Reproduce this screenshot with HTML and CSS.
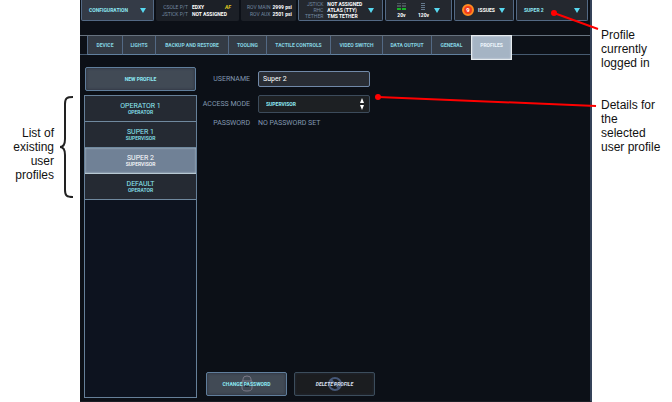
FILE: index.html
```html
<!DOCTYPE html>
<html lang="en">
<head>
<meta charset="utf-8">
<title>Profiles</title>
<link rel="stylesheet" href="styles.css">
</head>
<body>
<div class="figure">
  <aside class="note note-left">
    <p>List of<br>existing<br>user<br>profiles</p>
    <svg class="brace" viewBox="0 0 14 102" aria-hidden="true"><path d="M13 1C7 1 5 2 5 8V43C5 48 3 51 0 51C3 51 5 54 5 59V94C5 100 7 101 13 101"/></svg>
  </aside>

  <main class="app">
    <header class="topbar">
      <button class="cell cell-menu" type="button"><span>CONFIGURATION</span><i class="caret"></i></button>
      <div class="cell cell-info">
        <dl class="readout">
          <dt>CSOLE P/T</dt><dd>EDXY <em>AF</em></dd>
          <dt>JSTICK P/T</dt><dd>NOT ASSIGNED</dd>
        </dl>
      </div>
      <div class="cell cell-info cell-end">
        <dl class="readout">
          <dt>ROV MAIN</dt><dd>2999 psi</dd>
          <dt>ROV AUX</dt><dd>2501 psi</dd>
        </dl>
      </div>
      <button class="cell cell-devices" type="button">
        <span class="readout readout-dense">
          <span class="key">JSTICK</span><b>NOT ASSIGNED</b>
          <span class="key">RHC</span><b>ATLAS (TTY)</b>
          <span class="key">TETHER</span><b>TMS TETHER</b>
        </span>
        <i class="caret"></i>
      </button>
      <button class="cell cell-power" type="button">
        <span class="meter">
          <svg viewBox="0 0 9 8" aria-hidden="true"><path class="off" d="M0 0h4v1H0zM5 0h4v1H5zM0 2h4v2H0zM5 2h4v2H5z"/><path class="on" d="M0 5h4v2H0zM5 5h4v2H5z"/></svg>
          <b>20v</b>
        </span>
        <span class="meter">
          <svg viewBox="0 0 9 8" aria-hidden="true"><path class="idle" d="M2 0h4v1H2zM2 2h4v1H2zM2 4h4v1H2zM2 6h4v1H2z"/></svg>
          <b>120v</b>
        </span>
        <i class="caret"></i>
      </button>
      <button class="cell cell-issues" type="button"><span class="count">9</span><b>ISSUES</b><i class="caret"></i></button>
      <button class="cell cell-menu cell-user" type="button"><span>SUPER 2</span><i class="caret"></i></button>
    </header>

    <nav class="tabs">
      <a href="#device">DEVICE</a>
      <a href="#lights">LIGHTS</a>
      <a href="#backup">BACKUP AND RESTORE</a>
      <a href="#tooling">TOOLING</a>
      <a href="#tactile">TACTILE CONTROLS</a>
      <a href="#video">VIDEO SWITCH</a>
      <a href="#data">DATA OUTPUT</a>
      <a href="#general">GENERAL</a>
      <a class="active" href="#profiles" aria-current="page">PROFILES</a>
    </nav>

    <div class="content">
      <section class="sidebar">
        <button class="button button-new" type="button">NEW PROFILE</button>
        <div class="profiles">
          <button type="button">OPERATOR 1<small>OPERATOR</small></button>
          <button type="button">SUPER 1<small>SUPERVISOR</small></button>
          <button class="selected" type="button">SUPER 2<small>SUPERVISOR</small></button>
          <button type="button">DEFAULT<small>OPERATOR</small></button>
        </div>
      </section>

      <form class="details">
        <div class="fields">
          <label for="username">USERNAME</label>
          <input id="username" type="text" value="Super 2">
          <label for="mode">ACCESS MODE</label>
          <div class="select">
            <select id="mode"><option>SUPERVISOR</option><option>OPERATOR</option></select>
            <svg viewBox="0 0 6 12" aria-hidden="true"><path d="M3 0L5 5H1zM3 12L1 7H5z"/></svg>
          </div>
          <span class="caption">PASSWORD</span>
          <span>NO PASSWORD SET</span>
        </div>
        <div class="actions">
          <button class="button button-action" type="button">
            <svg viewBox="0 0 16 18" aria-hidden="true"><path d="M4 6V4Q4 1 8 1T12 4V6M3 6H13V13Q13 16 8 16T3 13Z"/><path class="hole" d="M8 8L10 12H6z"/></svg>
            <span>CHANGE PASSWORD</span>
          </button>
          <button class="button button-action button-delete" type="button">
            <svg viewBox="0 0 16 18" aria-hidden="true"><circle cx="8" cy="9" r="6"/><path d="M4 5L12 13"/></svg>
            <span>DELETE PROFILE</span>
          </button>
        </div>
      </form>
    </div>
  </main>

  <aside class="note note-right">
    <p>Profile<br>currently<br>logged in</p>
    <p>Details for<br>the<br>selected<br>user profile</p>
    <svg class="pointer pointer-user" viewBox="0 0 48 24" aria-hidden="true"><path d="M3 4L47 20"/><circle cx="3" cy="4" r="3"/></svg>
    <svg class="pointer pointer-details" viewBox="0 0 222 18" aria-hidden="true"><path d="M3 4L221 13"/><circle cx="3" cy="4" r="3"/></svg>
  </aside>
</div>
</body>
</html>
```
FILE: styles.css
```css
* { box-sizing: border-box; }

body {
  margin: 0;
  background: #fff;
  font-family: Roboto, "Liberation Sans", sans-serif;
}

button, input, select {
  margin: 0;
  font-family: inherit;
  color: inherit;
}

.figure {
  display: grid;
  grid-template-columns: 80px 1fr 80px;
  min-height: 100vh;
}

/* Annotations */
.note {
  position: relative;
  color: #111;
  font: 12px/14px "Liberation Sans", Arial, sans-serif;
}
.note p { margin: 0; white-space: nowrap; }
.note-left { padding: 126px 26px 0 0; text-align: right; }
.note-right { padding: 28px 0 0 9px; }
.note-right p + p { margin-top: 28px; }

.brace {
  position: absolute;
  left: 60px;
  top: 96px;
  width: 14px;
  height: 102px;
  fill: none;
  stroke: #222;
  stroke-width: 2;
}
.pointer {
  position: absolute;
  fill: #f00;
  stroke: #f00;
  stroke-width: 2;
}
.pointer circle { stroke: none; }
.pointer-user { right: 73px; top: 9px; width: 48px; height: 24px; }
.pointer-details { right: 75px; top: 93px; width: 222px; height: 18px; }

/* Application window */
.app {
  display: flex;
  flex-direction: column;
  min-width: 0;
  background: #0c1017;
  border-right: 2px solid #354359;
  border-bottom: 1px solid #1b1f26;
  color: #8eeaf5;
}

.topbar {
  display: grid;
  grid-template-columns: 73fr 83fr 55fr 85fr 67fr 60fr 72fr;
  gap: 2px;
  height: 21px;
  padding: 0 2px 0 1px;
}
.cell {
  display: flex;
  align-items: center;
  min-width: 0;
  padding: 0 7px;
  background: #24282f;
  border: 1px solid #536984;
  border-top: 0;
  border-radius: 0 0 2px 2px;
  font-size: 5px;
  line-height: 6px;
  font-weight: 700;
  white-space: nowrap;
}
.cell b { color: #fff; font-weight: 700; }
.cell-menu { justify-content: space-between; background: #343b47; }
.cell-user { background: #24282f; }
.cell-info { border-color: #1c2027; background: #1c2027; padding: 0 7px 0 5px; }
.cell-end { padding: 0 8px 0 5px; }
.cell-devices { justify-content: space-between; padding: 0 8px 0 6px; }
.cell-power { padding: 0 11px; }
.cell-power .meter + .meter { margin-left: 12px; }
.cell-power .caret { margin-left: auto; }
.cell-issues { justify-content: space-between; padding: 0 8px 0 7px; }

.caret {
  border: 3px solid transparent;
  border-top: 5px solid #57d8f0;
  border-bottom: 0;
}

.readout {
  display: grid;
  grid-template-columns: auto 1fr;
  gap: 1px 4px;
  flex: 1;
  margin: 0;
}
.readout dt, .readout .key {
  color: #7388a1;
  font-weight: 400;
  text-align: right;
}
.readout dd {
  display: flex;
  justify-content: space-between;
  margin: 0;
  color: #fff;
  font-weight: 700;
}
.readout em { color: #e5d21f; }
.readout-dense { flex: none; gap: 0 4px; text-align: left; }
.cell-end .readout { gap: 1px 2px; }

.meter {
  display: flex;
  flex-direction: column;
  align-items: center;
  gap: 1px;
}
.meter svg { width: 9px; height: 8px; }
.meter .off { fill: #4b555c; }
.meter .on { fill: #18b427; }
.meter .idle { fill: #64788c; }

.count {
  display: grid;
  place-items: center;
  width: 12px;
  height: 12px;
  background: #f23c1d;
  border: 2px solid #ff8b20;
  border-radius: 50%;
  color: #fff;
  font-size: 6px;
  font-weight: 700;
}

/* Tabs */
.tabs {
  display: grid;
  grid-template-columns: 35fr 33fr 73fr 38fr 64fr 52fr 49fr 40fr 41fr;
  height: 20px;
  margin-top: 14px;
  padding: 0 78px 0 7px;
  border-top: 1px solid #66727f;
  border-bottom: 1px solid #465a70;
}
.tabs a {
  height: 19px;
  background: #343b45;
  border-left: 1px solid #536984;
  border-bottom: 1px solid #61809f;
  color: #86d5e2;
  font-size: 5px;
  line-height: 18px;
  font-weight: 700;
  text-align: center;
  text-decoration: none;
  white-space: nowrap;
}
.tabs .active {
  height: 25px;
  margin-top: -1px;
  background: #a5b4c4;
  border: 1px solid #e6ebef;
  box-shadow: inset 0 0 2px #e6ebef;
  color: #eef6fc;
}

/* Content */
.content {
  display: flex;
  flex: 1;
  padding: 12px 0 3px 4px;
}
.sidebar {
  display: flex;
  flex-direction: column;
  flex: 0 0 113px;
  gap: 4px;
}
.button {
  border: 1px solid #607e9c;
  border-radius: 2px;
  background: #414a55;
  box-shadow: inset 0 0 3px #252d39;
  font-size: 5px;
  font-weight: 700;
}
.button-new { height: 24px; margin: 0 1px; }

.profiles {
  flex: 1;
  background: #0d131f;
  border: 1px solid #668099;
}
.profiles button {
  display: block;
  width: 100%;
  height: 26px;
  padding: 0;
  background: #252a33;
  border: 0;
  border-bottom: 1px solid #70899f;
  font-size: 7px;
  line-height: 8px;
}
.profiles small {
  display: block;
  font-size: 5px;
  line-height: 5px;
  font-weight: 500;
}
.profiles .selected {
  background: #708196;
  box-shadow: inset 0 0 2px #c1d0dc;
  border-color: #b8c9d3;
  color: #fff;
}

.details {
  display: flex;
  flex-direction: column;
  justify-content: space-between;
  flex: 1;
  padding: 4px 0 2px;
}
.fields {
  display: grid;
  grid-template-columns: 53px 112px;
  gap: 8px;
  align-items: center;
  color: #8299b1;
  font-size: 7px;
  line-height: 4px;
}
.fields label, .caption { text-align: right; white-space: nowrap; }
.fields label { justify-self: end; }
.fields input {
  width: 100%;
  height: 16px;
  padding: 0 4px;
  background: #292d34;
  border: 1px solid #7189a8;
  border-radius: 2px;
  color: #fff;
  font-size: 7px;
}
.select { position: relative; height: 18px; }
.fields select {
  appearance: none;
  display: block;
  width: 100%;
  height: 100%;
  padding: 0 7px;
  background: #1d2023;
  border: 1px solid #3c4b5b;
  border-radius: 2px;
  color: #8eeaf5;
  font-size: 5px;
  font-weight: 700;
}
.select svg {
  position: absolute;
  right: 5px;
  top: 3px;
  width: 6px;
  height: 12px;
  fill: #fff;
  pointer-events: none;
}

.actions { display: flex; gap: 7px; padding-left: 9px; }
.button-action {
  display: grid;
  place-items: center;
  width: 81px;
  height: 24px;
  padding: 0;
}
.button-action > * { grid-area: 1 / 1; }
.button-action svg {
  width: 16px;
  height: 18px;
  fill: none;
  stroke: #7b7988;
}
.button-action .hole { fill: #252a33; stroke: none; }
.button-delete {
  background: #1b1d20;
  border-color: #3c4d5c;
  color: #dce0f0;
  font-style: italic;
}
.button-delete svg { stroke: #465879; stroke-width: 2; }
```
